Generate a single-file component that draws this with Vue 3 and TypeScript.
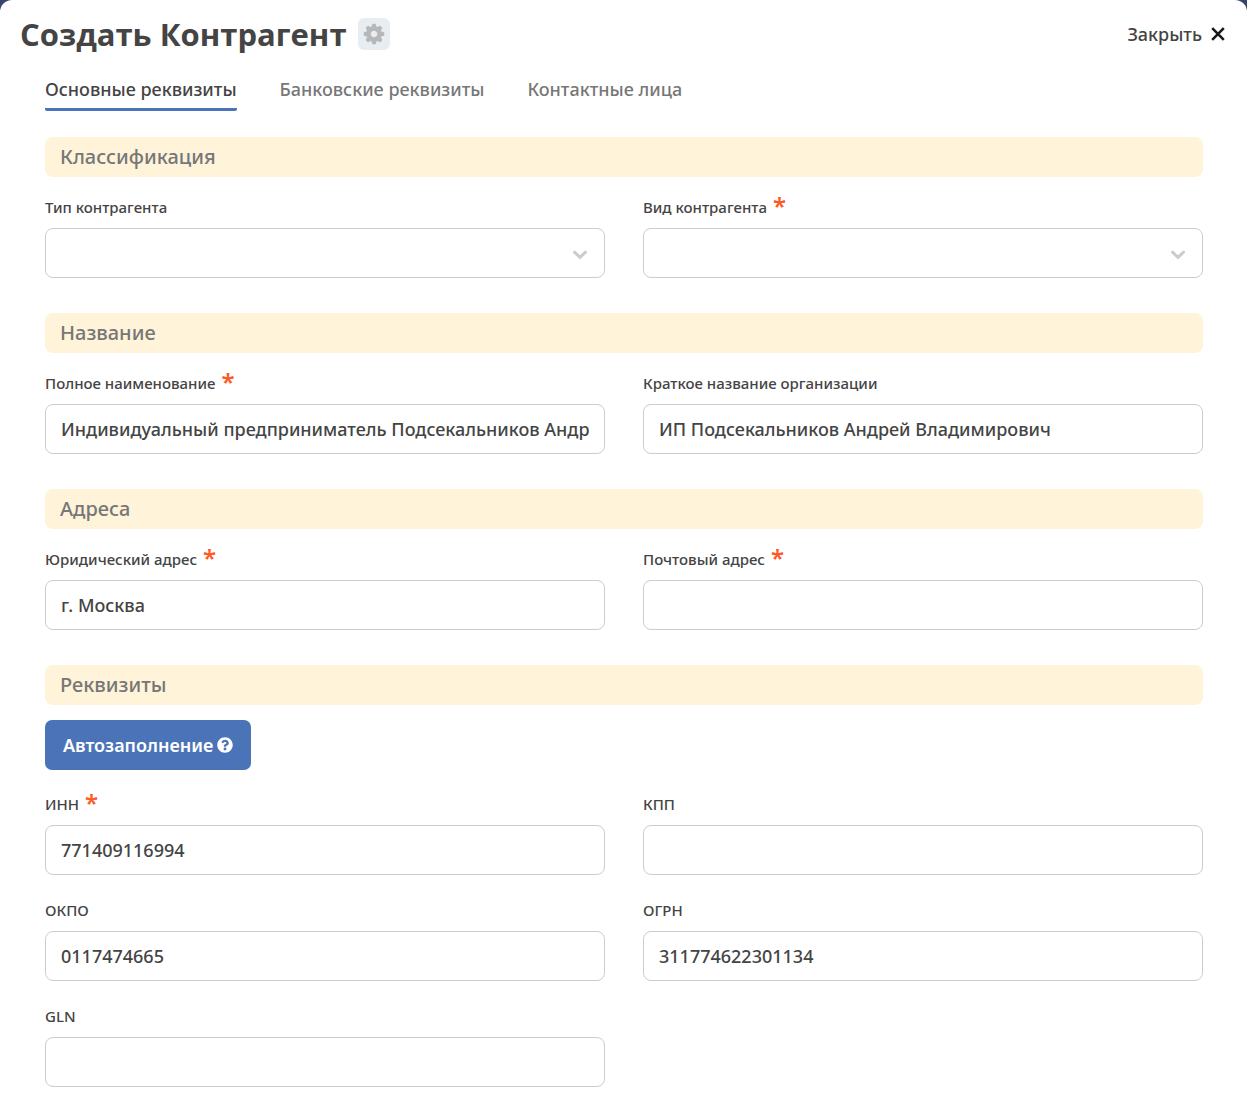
<script setup lang="ts">
import { reactive, ref } from 'vue'

interface Field {
  id: string
  label: string
  required?: boolean
  kind?: 'select'
}

interface Section {
  title: string
  autofill?: boolean
  fields: Field[]
}

const tabs: string[] = ['Основные реквизиты', 'Банковские реквизиты', 'Контактные лица']
const activeTab = ref(0)

const gearTeeth: number[] = [0, 45, 90, 135, 180, 225, 270, 315]

const sections: Section[] = [
  {
    title: 'Классификация',
    fields: [
      { id: 'type', label: 'Тип контрагента', kind: 'select' },
      { id: 'kind', label: 'Вид контрагента', kind: 'select', required: true },
    ],
  },
  {
    title: 'Название',
    fields: [
      { id: 'fullName', label: 'Полное наименование', required: true },
      { id: 'shortName', label: 'Краткое название организации' },
    ],
  },
  {
    title: 'Адреса',
    fields: [
      { id: 'legalAddress', label: 'Юридический адрес', required: true },
      { id: 'postAddress', label: 'Почтовый адрес', required: true },
    ],
  },
  {
    title: 'Реквизиты',
    autofill: true,
    fields: [
      { id: 'inn', label: 'ИНН', required: true },
      { id: 'kpp', label: 'КПП' },
      { id: 'okpo', label: 'ОКПО' },
      { id: 'ogrn', label: 'ОГРН' },
      { id: 'gln', label: 'GLN' },
    ],
  },
]

const values = reactive<Record<string, string>>({
  type: '',
  kind: '',
  fullName: 'Индивидуальный предприниматель Подсекальников Андрей Владимирович',
  shortName: 'ИП Подсекальников Андрей Владимирович',
  legalAddress: 'г. Москва',
  postAddress: '',
  inn: '771409116994',
  kpp: '',
  okpo: '0117474665',
  ogrn: '311774622301134',
  gln: '',
})
</script>

<template>
  <main class="panel">
    <header class="header">
      <h1 class="title">Создать Контрагент</h1>
      <button class="settings" type="button" aria-label="Настройки">
        <svg width="22" height="22" viewBox="-11 -11 22 22" aria-hidden="true">
          <g fill="#b7b7b7">
            <path
              v-for="angle in gearTeeth"
              :key="angle"
              d="M-2.800 -6L-1.900 -9.400Q-1.700 -10.300 -0.800 -10.300H0.800Q1.700 -10.300 1.900 -9.400L2.800 -6Z"
              :transform="`rotate(${angle})`"
            />
          </g>
          <circle r="5.500" fill="none" stroke="#b7b7b7" stroke-width="4.400" />
        </svg>
      </button>
      <button class="close" type="button">
        Закрыть
        <svg width="14" height="14" viewBox="0 0 14 14" aria-hidden="true">
          <path d="M1.200 1.200l11.600 11.600M12.800 1.200l-11.600 11.600" stroke="#16181b" stroke-width="2.600" fill="none" />
        </svg>
      </button>
    </header>

    <nav class="tabs">
      <button
        v-for="(tab, i) in tabs"
        :key="tab"
        type="button"
        class="tab"
        :class="{ active: i === activeTab }"
        @click="activeTab = i"
      >
        {{ tab }}
      </button>
    </nav>

    <form class="form" @submit.prevent>
      <section v-for="section in sections" :key="section.title" class="section">
        <h2 class="section-title">{{ section.title }}</h2>
        <button v-if="section.autofill" type="button" class="autofill">
          Автозаполнение
          <svg width="16" height="16" viewBox="0 0 512 512" aria-hidden="true">
            <path
              fill="#fff"
              d="M504 256c0 136.997-111.043 248-248 248S8 392.997 8 256C8 119.083 119.043 8 256 8s248 111.083 248 248zM262.655 90c-54.497 0-89.255 22.957-116.549 63.758-3.536 5.286-2.353 12.415 2.715 16.258l34.699 26.310c5.205 3.947 12.621 3.008 16.665-2.122 17.864-22.658 30.113-35.797 57.303-35.797 20.429 0 45.698 13.148 45.698 32.958 0 14.976-12.363 22.667-32.534 33.976C247.128 238.528 216 254.941 216 296v4c0 6.627 5.373 12 12 12h56c6.627 0 12-5.373 12-12v-1.333c0-28.462 83.186-29.647 83.186-106.667 0-58.002-60.165-102-116.531-102zM256 338c-25.365 0-46 20.635-46 46 0 25.364 20.635 46 46 46s46-20.636 46-46c0-25.365-20.635-46-46-46z"
            />
          </svg>
        </button>
        <div class="grid">
          <div v-for="field in section.fields" :key="field.id" class="field">
            <label class="label" :for="field.id">
              {{ field.label }}
              <span v-if="field.required" class="star">*</span>
            </label>
            <div v-if="field.kind === 'select'" class="select">
              <select :id="field.id" v-model="values[field.id]" class="control">
                <option value=""></option>
              </select>
              <svg class="chevron" width="16" height="10" viewBox="0 0 16 10" aria-hidden="true">
                <path
                  d="M2.500 2.200L8 7.400l5.500-5.200"
                  fill="none"
                  stroke="#ccc"
                  stroke-width="3"
                  stroke-linecap="round"
                />
              </svg>
            </div>
            <input v-else :id="field.id" v-model="values[field.id]" type="text" class="control" />
          </div>
        </div>
      </section>
    </form>
  </main>
</template>

<style>
body {
  margin: 0;
  background: #34466b;
}
</style>

<style scoped>
.panel {
  box-sizing: border-box;
  min-height: 100vh;
  padding-bottom: 15px;
  background: #fff;
  border-radius: 12px 12px 0 0;
  color: #444;
  font-family: 'Noto Sans', 'Open Sans', sans-serif;
  font-weight: 500;
}

button,
input,
select {
  font: inherit;
  color: inherit;
}

button {
  padding: 0;
  border: 0;
  background: none;
  cursor: pointer;
}

.header {
  display: flex;
  align-items: center;
  height: 68px;
  padding: 0 22px 0 20px;
}

.title {
  margin: 0;
  font-family: 'Open Sans', 'Noto Sans', sans-serif;
  font-size: 31px;
  line-height: 38px;
  font-weight: 700;
}

.settings {
  display: flex;
  align-items: center;
  justify-content: center;
  width: 32px;
  height: 32px;
  margin-left: 11px;
  border-radius: 6px;
  background: #e7edf0;
}

.close {
  display: flex;
  align-items: center;
  gap: 9px;
  margin-left: auto;
  font-size: 18px;
}

.tabs {
  display: flex;
  gap: 43px;
  padding: 1px 44px 0 45px;
}

.tab {
  height: 42px;
  border-bottom: 3px solid transparent;
  border-radius: 2px;
  color: #777;
  font-size: 18px;
  line-height: 36px;
}

.tab.active {
  border-color: #4b74b8;
  color: #444;
}

.form {
  display: flex;
  flex-direction: column;
  gap: 35px;
  padding: 26px 44px 0 45px;
}

.section-title {
  margin: 0 0 15px;
  padding: 0 15px;
  border-radius: 8px;
  background: #fff4d9;
  color: #777;
  font-size: 20px;
  line-height: 40px;
  font-weight: 500;
}

.autofill {
  display: flex;
  align-items: center;
  gap: 4px;
  height: 50px;
  margin-bottom: 19px;
  padding: 0 18px;
  border-radius: 7px;
  background: #4b74b8;
  color: #fff;
  font-size: 18px;
  font-weight: 600;
}

.grid {
  display: grid;
  grid-template-columns: repeat(2, minmax(0, 1fr));
  gap: 20px 38px;
}

.label {
  display: flex;
  gap: 6px;
  height: 36px;
  font-size: 15px;
  line-height: 30px;
}

.star {
  color: #ff5a26;
  font-size: 24px;
  line-height: 28px;
  font-weight: 600;
}

.control {
  display: block;
  box-sizing: border-box;
  width: 100%;
  height: 50px;
  margin: 0;
  padding: 0 15px;
  border: 1px solid #ccc;
  border-radius: 8px;
  outline: none;
  appearance: none;
  background: #fff;
  font-size: 18px;
}

.select {
  position: relative;
}

.chevron {
  position: absolute;
  top: 22px;
  right: 17px;
  pointer-events: none;
}
</style>
